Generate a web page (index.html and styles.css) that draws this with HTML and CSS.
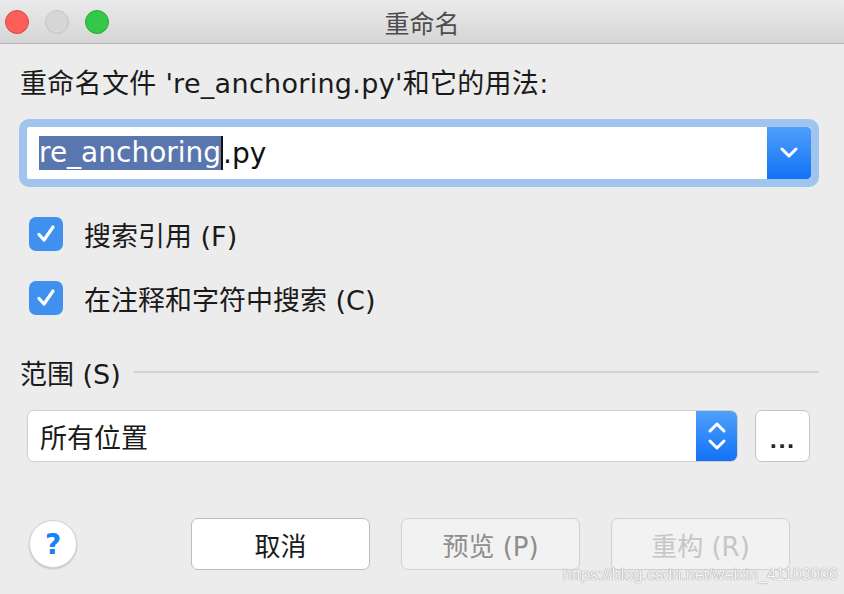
FILE: index.html
```html
<!DOCTYPE html>
<html lang="zh-CN">
<head>
    <meta charset="UTF-8">
    <meta name="viewport" content="width=device-width, initial-scale=1.0">
    <title>重命名</title>
    <link rel="stylesheet" href="styles.css">
</head>
<body>

    <div class="window">

        <!-- Title bar -->
        <div class="titlebar">
            <div class="lights">
                <span class="light red"></span>
                <span class="light gray"></span>
                <span class="light green"></span>
            </div>
            <div class="title">重命名</div>
            <div></div>
        </div>

        <div class="content">
            <div class="prompt">重命名文件 're_anchoring.py'和它的用法:</div>

            <!-- Name field -->
            <div class="combo">
                <div class="combo-input"><span class="sel">re_anchoring</span><span class="caret"></span>.py</div>
                <div class="combo-btn">
                    <svg width="20" height="12" viewBox="0 0 20 12">
                        <path d="M3 2 L10 9 L17 2" fill="none" stroke="#fff" stroke-width="3" stroke-linecap="round" stroke-linejoin="round"/>
                    </svg>
                </div>
            </div>

            <!-- Options -->
            <div class="options">
                <label class="check">
                    <span class="box">
                        <svg width="24" height="24" viewBox="0 0 24 24">
                            <path d="M5 12.5 L10 18 L19 5" fill="none" stroke="#fff" stroke-width="3.2" stroke-linecap="round" stroke-linejoin="round"/>
                        </svg>
                    </span>
                    搜索引用 (F)
                </label>
                <label class="check">
                    <span class="box">
                        <svg width="24" height="24" viewBox="0 0 24 24">
                            <path d="M5 12.5 L10 18 L19 5" fill="none" stroke="#fff" stroke-width="3.2" stroke-linecap="round" stroke-linejoin="round"/>
                        </svg>
                    </span>
                    在注释和字符中搜索 (C)
                </label>
            </div>

            <!-- Scope -->
            <div class="section">
                <span>范围 (S)</span>
                <span class="rule"></span>
            </div>

            <div class="scope-row">
                <div class="select">
                    <div class="select-value">所有位置</div>
                    <div class="stepper">
                        <svg width="20" height="34" viewBox="0 0 20 34">
                            <path d="M3 12 L10 5 L17 12" fill="none" stroke="#fff" stroke-width="3" stroke-linecap="round" stroke-linejoin="round"/>
                            <path d="M3 22 L10 29 L17 22" fill="none" stroke="#fff" stroke-width="3" stroke-linecap="round" stroke-linejoin="round"/>
                        </svg>
                    </div>
                </div>
                <button class="more">...</button>
            </div>
        </div>

        <!-- Footer buttons -->
        <div class="footer">
            <button class="help">?</button>
            <div class="actions">
                <button class="button">取消</button>
                <button class="button disabled">预览 (P)</button>
                <button class="button disabled faint">重构 (R)</button>
            </div>
        </div>

        <div class="watermark">https://blog.csdn.net/weixin_41103006</div>
    </div>

</body>
</html>
```

FILE: styles.css
```css
body {
    margin: 0;
    font-family: "DejaVu Sans", "Noto Sans CJK SC", sans-serif;
    background-color: #ececec;
    color: #1a1a1a;
}
.window {
    position: relative;
    width: 844px;
    height: 594px;
    overflow: hidden;
}
.titlebar {
    height: 44px;
    display: grid;
    grid-template-columns: 1fr auto 1fr;
    align-items: center;
    background: linear-gradient(#ebebeb, #d5d5d5);
    border-bottom: 1px solid #b9b9b9;
    box-sizing: border-box;
}
.lights {
    display: flex;
    gap: 16px;
    padding-left: 5px;
}
.light {
    width: 24px;
    height: 24px;
    border-radius: 50%;
    box-sizing: border-box;
}
.red {
    background-color: #fc5f57;
    border: 1px solid #e0443e;
}
.gray {
    background-color: #d6d6d6;
    border: 1px solid #c4c4c4;
}
.green {
    background-color: #34c748;
    border: 1px solid #27aa35;
}
.title {
    font-size: 25px;
    color: #4d4d4d;
}
.content {
    padding: 0 25px 0 20px;
}
.prompt {
    margin-top: 22px;
    font-size: 27px;
    line-height: 36px;
    letter-spacing: 0.3px;
}
.combo {
    margin-top: 17px;
    margin-left: -1px;
    display: flex;
    height: 68px;
    box-sizing: border-box;
    border: 8px solid #9fc4ee;
    border-radius: 10px;
    background-color: #fff;
}
.combo-input {
    flex: 1;
    display: flex;
    align-items: center;
    padding-left: 12px;
    font-size: 28px;
    color: #111;
}
.sel {
    background-color: #5a76ae;
    color: #fff;
    line-height: 34px;
}
.caret {
    width: 2px;
    height: 34px;
    background-color: #111;
}
.combo-btn {
    width: 44px;
    display: flex;
    align-items: center;
    justify-content: center;
    background: linear-gradient(#4fa0fb, #1272f6);
    border-radius: 0 4px 4px 0;
}
.options {
    margin-top: 30px;
    display: flex;
    flex-direction: column;
    gap: 30px;
    padding-left: 9px;
}
.check {
    display: flex;
    align-items: center;
    gap: 21px;
    font-size: 27px;
    height: 34px;
}
.box {
    width: 34px;
    height: 34px;
    border-radius: 7px;
    background-color: #3f90ef;
    display: flex;
    align-items: center;
    justify-content: center;
}
.section {
    margin-top: 40px;
    display: flex;
    align-items: center;
    gap: 13px;
    font-size: 27px;
    height: 34px;
}
.rule {
    flex: 1;
    height: 2px;
    background-color: #d2d2d2;
}
.scope-row {
    margin-top: 21px;
    display: flex;
    gap: 17px;
    padding-left: 7px;
    height: 52px;
}
.select {
    width: 711px;
    display: flex;
    background-color: #fff;
    border: 1px solid #cfcfcf;
    border-radius: 7px;
    box-sizing: border-box;
    overflow: hidden;
}
.select-value {
    flex: 1;
    display: flex;
    align-items: center;
    padding-left: 12px;
    font-size: 27px;
}
.stepper {
    width: 41px;
    display: flex;
    align-items: center;
    justify-content: center;
    background: linear-gradient(#4fa0fb, #1272f6);
}
.more {
    width: 55px;
    height: 52px;
    background-color: #fff;
    border: 1px solid #c4c4c4;
    border-radius: 7px;
    font-family: "DejaVu Sans", sans-serif;
    font-size: 20px;
    font-weight: bold;
    letter-spacing: 1px;
    padding: 10px 0 0;
    color: #222;
}
.footer {
    margin-top: 56px;
    display: flex;
    align-items: center;
    padding-left: 29px;
}
.help {
    width: 48px;
    height: 48px;
    border-radius: 50%;
    background-color: #fff;
    border: 1px solid #d4d4d4;
    box-shadow: 0 1px 2px rgba(0, 0, 0, 0.2);
    color: #1a82f5;
    font-family: "DejaVu Sans", sans-serif;
    font-size: 28px;
    font-weight: bold;
    padding: 0;
}
.actions {
    display: flex;
    gap: 31px;
    margin-left: 114px;
}
.button {
    width: 179px;
    height: 52px;
    background-color: #fff;
    border: 1px solid #bdbdbd;
    border-radius: 7px;
    font-family: "DejaVu Sans", "Noto Sans CJK SC", sans-serif;
    font-size: 26px;
    color: #1a1a1a;
    padding: 0;
}
.button.disabled {
    background-color: #f2f2f2;
    border-color: #d0d0d0;
    color: #8e8e8e;
}
.button.faint {
    color: #c6c6c6;
}
.watermark {
    position: absolute;
    left: 563px;
    top: 566px;
    font-family: "Liberation Sans", sans-serif;
    font-size: 16px;
    letter-spacing: 0.1px;
    color: #f8f8f8;
    text-shadow: 0 0 1px #999, 0 0 1px #999;
}
```
